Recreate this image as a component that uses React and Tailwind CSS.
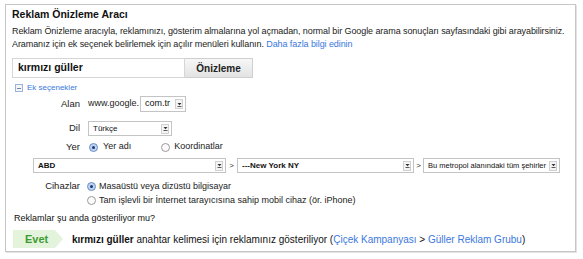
import React from 'react';

const font = { fontFamily: '"Liberation Sans", Arial, sans-serif' };

function Select({ width, children, bold = false, size = 'text-[8px]' }) {
  return (
    <div className={`flex items-center h-full border border-[#c4c4c4] bg-white ${width}`}>
      <span className={`flex-1 pl-[4px] ${size} text-[#111] whitespace-nowrap overflow-hidden ${bold ? 'font-bold' : ''}`}>{children}</span>
      <span className="flex flex-col items-center justify-center w-[8px] h-[10px] mr-[2px] border border-[#d0d0d0] bg-[#f4f4f4]">
        <svg width="5" height="5" viewBox="0 0 5 5">
          <path d="M0.5 1 L4.5 1 L2.5 3.2 Z" fill="#333" />
          <path d="M0.5 4.5 L4.5 4.5" stroke="#333" strokeWidth="0.8" />
        </svg>
      </span>
    </div>
  );
}

function Radio({ checked }) {
  return checked ? (
    <span className="flex items-center justify-center w-[9px] h-[9px] rounded-full border border-[#6d8fc4] bg-[#bcd4f2]">
      <span className="w-[3px] h-[3px] rounded-full bg-[#1d3a72]" />
    </span>
  ) : (
    <span className="w-[9px] h-[9px] rounded-full border border-[#9a9a9a] bg-[#fafafa]" />
  );
}

function Label({ children }) {
  return <span className="w-[68px] text-right text-[9.5px] text-[#222] shrink-0">{children}</span>;
}

export default function App() {
  return (
    <div className="w-[583px] h-[259px] bg-white pt-[4px] pl-[5px]" style={font}>
      <div className="flex flex-col w-[571px] h-[248px] border border-[#c6c6c6] shadow-[1px_1px_0_#e2e2e2] px-[6px] pt-[2px]">
        <h1 className="text-[10.5px] leading-[14px] font-bold text-[#111]">Reklam Önizleme Aracı</h1>

        <p className="mt-[4px] text-[9px] leading-[13px] text-[#222] tracking-[-0.08px] whitespace-nowrap">
          Reklam Önizleme aracıyla, reklamınızı, gösterim almalarına yol açmadan, normal bir Google arama sonuçları sayfasındaki gibi arayabilirsiniz.
          <br />
          Aramanız için ek seçenek belirlemek için açılır menüleri kullanın.{' '}
          <a className="text-[#3b78e0]">Daha fazla bilgi edinin</a>
        </p>

        <div className="flex mt-[7px] h-[20px]">
          <div className="flex items-center w-[173px] border border-[#d6d6d6] pl-[5px] text-[10.5px] font-bold text-[#111]">
            kırmızı güller
          </div>
          <button className="w-[68px] border border-l-0 border-[#cfcfcf] bg-gradient-to-b from-[#f7f7f7] to-[#e3e3e3] text-[10px] font-bold text-[#222]">
            Önizleme
          </button>
        </div>

        <div className="flex items-center gap-[4px] mt-[4px] h-[12px] pl-[3px]">
          <span className="flex items-center justify-center w-[8px] h-[8px] border border-[#9fb3d6] bg-[#f2f5fa]">
            <span className="w-[4px] h-px bg-[#6b86b8]" />
          </span>
          <a className="text-[8px] text-[#3b78e0]">Ek seçenekler</a>
        </div>

        <div className="flex items-center gap-[8px] mt-[2px] h-[16px]">
          <Label>Alan</Label>
          <span className="text-[9px] text-[#222]">www.google.</span>
          <div className="h-[16px] -ml-[7px]">
            <Select width="w-[46px]" size="text-[9px]">com.tr</Select>
          </div>
        </div>

        <div className="flex items-center gap-[8px] mt-[9px] h-[15px]">
          <Label>Dil</Label>
          <div className="h-[15px]">
            <Select width="w-[84px]">Türkçe</Select>
          </div>
        </div>

        <div className="flex items-center gap-[8px] mt-[4px] h-[14px] text-[9px] text-[#222]">
          <Label>Yer</Label>
          <div className="flex items-center gap-[5px] ml-[1px]">
            <Radio checked />
            <span>Yer adı</span>
          </div>
          <div className="flex items-center gap-[4px] ml-[22px]">
            <Radio />
            <span>Koordinatlar</span>
          </div>
        </div>

        <div className="flex items-center mt-[4px] h-[15px] pl-[21px] text-[8px] text-[#333]">
          <Select width="w-[193px]" bold>ABD</Select>
          <span className="w-[11px] text-center">&gt;</span>
          <Select width="w-[177px]" bold>---New York NY</Select>
          <span className="w-[9px] text-center">&gt;</span>
          <Select width="w-[137px]" size="text-[7.5px]">Bu metropol alanındaki tüm şehirler</Select>
        </div>

        <div className="flex items-center gap-[8px] mt-[7px] h-[13px]">
          <Label>Cihazlar</Label>
          <div className="flex items-center gap-[3px] ml-[-1px] text-[9px] text-[#222]">
            <Radio checked />
            <span>Masaüstü veya dizüstü bilgisayar</span>
          </div>
        </div>
        <div className="flex items-center gap-[3px] mt-[1px] h-[13px] pl-[75px] text-[9px] text-[#222]">
          <Radio />
          <span>Tam işlevli bir İnternet tarayıcısına sahip mobil cihaz (ör. iPhone)</span>
        </div>

        <p className="mt-[5px] h-[13px] leading-[13px] pl-[2px] text-[9px] text-[#111]">Reklamlar şu anda gösteriliyor mu?</p>

        <div className="flex items-center mt-[5px] h-[18px] pl-[1px]">
          <span className="flex items-center h-[18px] w-[50px] pl-[12px] bg-[#e3f3dc] text-[11px] font-bold text-[#3d9b32] [clip-path:polygon(0_0,84%_0,100%_50%,84%_100%,0_100%)]">
            Evet
          </span>
          <span className="ml-[9px] text-[10px] text-[#111]">
            <b>kırmızı güller</b> anahtar kelimesi için reklamınız gösteriliyor (
            <a className="text-[#3b78e0]">Çiçek Kampanyası</a> &gt; <a className="text-[#3b78e0]">Güller Reklam Grubu</a>)
          </span>
        </div>
      </div>
    </div>
  );
}
